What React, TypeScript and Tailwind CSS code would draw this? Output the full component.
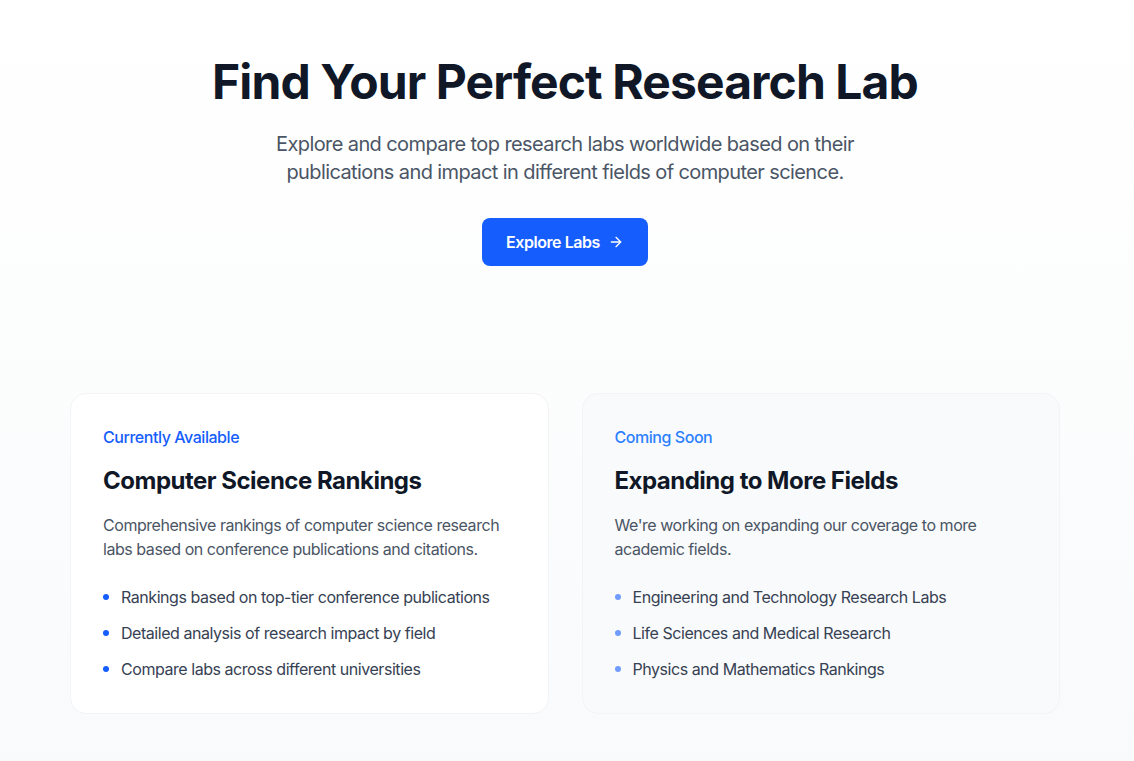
import React from "react";

const ArrowRight = () => (
  <svg width="16" height="16" viewBox="0 0 24 24" fill="none" stroke="currentColor" strokeWidth="2" strokeLinecap="round" strokeLinejoin="round">
    <path d="M5 12h14" />
    <path d="m12 5 7 7-7 7" />
  </svg>
);

type CardProps = {
  label: string;
  title: string;
  desc: string;
  items: string[];
  muted?: boolean;
};

const Card = ({ label, title, desc, items, muted }: CardProps) => (
  <div
    className={`rounded-2xl border p-8 ${
      muted ? "bg-gray-50 border-gray-100" : "bg-white border-gray-100"
    }`}
  >
    <div className={`text-base font-medium leading-6 tracking-[-0.45px] mb-4 -mt-px ${muted ? "text-blue-500" : "text-blue-600"}`}>{label}</div>
    <h2 className="text-2xl leading-8 font-bold text-gray-900 tracking-[-0.5px] mb-4 mt-px">{title}</h2>
    <p className="text-base leading-6 text-gray-600 tracking-[-0.45px] mb-6">{desc}</p>
    <ul className="flex flex-col gap-3">
      {items.map((it) => (
        <li key={it} className="flex items-center text-base leading-6 text-gray-700 tracking-[-0.45px]">
          <span className={`w-1.5 h-1.5 rounded-full mr-3 shrink-0 ${muted ? "bg-blue-600/60" : "bg-blue-600"}`} />
          {it}
        </li>
      ))}
    </ul>
  </div>
);

export default function App() {
  return (
    <div
      className="min-h-screen bg-gradient-to-b from-white to-gray-50 pr-1"
      style={{ fontFamily: "Inter, 'Noto Sans', sans-serif" }}
    >
      <section className="pt-[58px] flex flex-col items-center text-center px-4">
        <h1 className="text-5xl leading-none font-bold text-gray-900 tracking-[-0.9px] mb-6">
          Find Your Perfect Research Lab
        </h1>
        <p className="text-xl leading-7 text-gray-600 max-w-2xl tracking-[-0.6px] mb-8">
          Explore and compare top research labs worldwide based on their publications and impact in different fields of computer science.
        </p>
        <button className="inline-flex items-center gap-2 px-6 py-3 rounded-lg bg-blue-600 text-white text-base leading-6 font-semibold tracking-[-0.45px]">
          Explore Labs
          <ArrowRight />
        </button>
      </section>
      <section className="mt-[127px] pb-[46px]">
        <div className="mx-auto w-[990px] grid grid-cols-2 gap-[33px]">
          <Card
            label="Currently Available"
            title="Computer Science Rankings"
            desc="Comprehensive rankings of computer science research labs based on conference publications and citations."
            items={[
              "Rankings based on top-tier conference publications",
              "Detailed analysis of research impact by field",
              "Compare labs across different universities",
            ]}
          />
          <Card
            muted
            label="Coming Soon"
            title="Expanding to More Fields"
            desc="We're working on expanding our coverage to more academic fields."
            items={[
              "Engineering and Technology Research Labs",
              "Life Sciences and Medical Research",
              "Physics and Mathematics Rankings",
            ]}
          />
        </div>
      </section>
    </div>
  );
}
